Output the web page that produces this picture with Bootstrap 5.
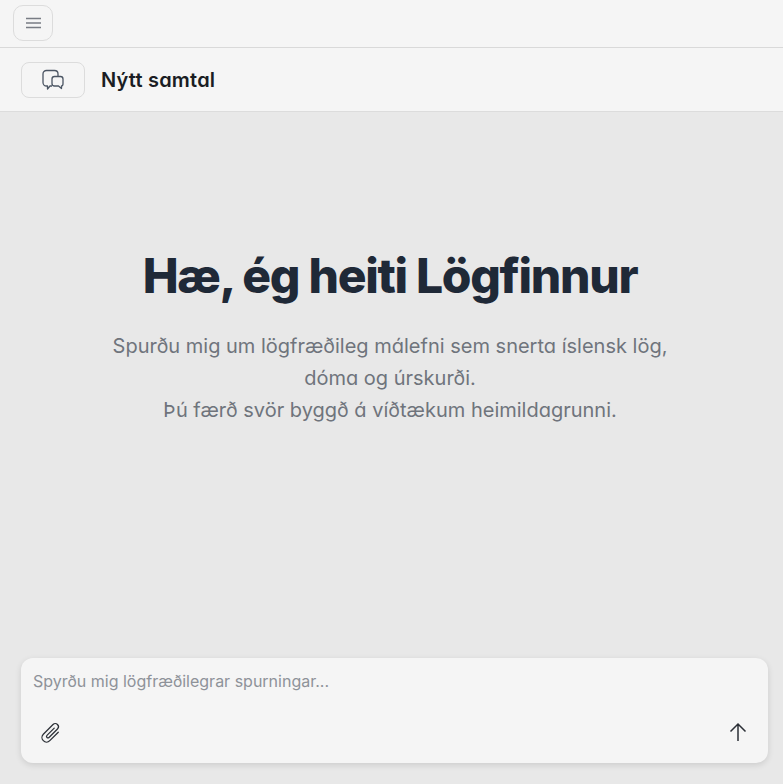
<!DOCTYPE html>
<html lang="is">
<head>
  <meta charset="UTF-8">
  <title>Lögfinnur</title>
  <link href="https://cdn.jsdelivr.net/npm/bootstrap@5.3.3/dist/css/bootstrap.min.css" rel="stylesheet">
  <style>
    html, body {
      height: 100%;
    }
    body {
      background-color: #e8e8e8;
      font-family: Inter, "Liberation Sans", sans-serif;
      font-feature-settings: "cv11";
      color: #1f2937;
    }
    .top-strip {
      height: 48px;
      background-color: #f5f5f5;
      border-bottom: 1px solid #d9d9d9;
      padding: 5px 13px;
    }
    .menu-btn {
      width: 40px;
      height: 36px;
      border: 1px solid #dcdcdc;
      border-radius: 10px;
      background-color: #f5f5f5;
      color: #787c84;
      padding: 0;
    }
    .chat-strip {
      height: 64px;
      background-color: #f5f5f5;
      border-bottom: 1px solid #dcdcdc;
      padding: 0 21px;
      gap: 16px;
    }
    .new-chat-btn {
      width: 64px;
      height: 36px;
      border: 1px solid #dcdcdc;
      border-radius: 8px;
      background-color: #f5f5f5;
      color: #4b5563;
      padding: 0;
    }
    .chat-title {
      font-size: 20px;
      font-weight: 600;
      letter-spacing: .2px;
      color: #1a1d23;
    }
    .hero {
      padding-top: 134px;
      padding-right: 3px;
    }
    .hero-title {
      font-size: 48px;
      line-height: 60px;
      font-weight: 800;
      letter-spacing: -1.3px;
      color: #1f2937;
      font-feature-settings: normal;
      margin-bottom: 24px;
    }
    .hero-text {
      font-size: 20px;
      line-height: 32px;
      color: #6f747c;
      width: 600px;
    }
    .ask-box {
      background-color: #f5f5f5;
      border-radius: 12px;
      box-shadow: 0 2px 6px rgba(0, 0, 0, .12);
      margin: 0 15px 21px 21px;
      height: 105px;
      padding: 11px 18px 18px;
    }
    .ask-input {
      border: 0;
      background: transparent;
      outline: 0;
      font-size: 16px;
      line-height: 24px;
      color: #1f2937;
      padding: 0 0 0 12px;
      margin-left: -18px;
      width: 100%;
    }
    .ask-input::placeholder {
      color: #8e9299;
    }
    .icon-btn {
      border: 0;
      background: transparent;
      padding: 0;
      width: 24px;
      height: 24px;
      color: #2b2f36;
    }
  </style>
</head>
<body class="d-flex flex-column">
  <div class="top-strip">
    <button type="button" class="menu-btn d-flex align-items-center justify-content-center" aria-label="Valmynd">
      <svg width="16" height="16" viewBox="0 0 16 16" fill="none" stroke="currentColor" stroke-width="1.5"><path d="M1 3.5h15M1 8h15M1 12.5h15"/></svg>
    </button>
  </div>
  <div class="chat-strip d-flex align-items-center">
    <button type="button" class="new-chat-btn d-flex align-items-center justify-content-center" aria-label="Nýtt samtal">
      <svg width="24" height="22" viewBox="0 0 24 22" fill="none" stroke="currentColor" stroke-width="1.3" stroke-linejoin="round"><path d="M11 17H9L6.5 20V17H5.5C3.5 17 2 15.5 2 13.5V5C2 3 3.5 1.5 5.5 1.5H13.5C15.5 1.5 17 3 17 5V7.5"/><path d="M13.5 7.5H19.5C21 7.5 22 8.5 22 10V14.5C22 16 21 17 20.5 17V19.5L17.5 17H13.5C12 17 11 16 11 14.5V10C11 8.5 12 7.5 13.5 7.5Z"/></svg>
    </button>
    <div class="chat-title">Nýtt samtal</div>
  </div>
  <main class="hero flex-grow-1 text-center d-flex flex-column align-items-center">
    <h1 class="hero-title">Hæ, ég heiti Lögfinnur</h1>
    <p class="hero-text mb-0">Spurðu mig um lögfræðileg málefni sem snerta íslensk lög, dóma og úrskurði.<br>Þú færð svör byggð á víðtækum heimildagrunni.</p>
  </main>
  <div class="ask-box d-flex flex-column justify-content-between">
    <input type="text" class="ask-input" placeholder="Spyrðu mig lögfræðilegrar spurningar...">
    <div class="d-flex justify-content-between align-items-center">
      <button type="button" class="icon-btn d-flex align-items-center justify-content-center" aria-label="Hengja við">
        <svg width="24" height="24" viewBox="1.5 1.5 21 21" fill="none" stroke="currentColor" stroke-width="1.1" stroke-linecap="round"><path d="M16 7V17.5a4 4 0 0 1-8 0V5.5a2.75 2.75 0 0 1 5.5 0V16a1.25 1.25 0 0 1-2.5 0V7" transform="rotate(45 12 12)"/></svg>
      </button>
      <button type="button" class="icon-btn d-flex align-items-center justify-content-center" aria-label="Senda">
        <svg width="24" height="24" viewBox="0 0 24 24" fill="none" stroke="currentColor" stroke-width="1.5"><path d="M12 20V3.5M4.5 10.5 12 3l7.5 7.5"/></svg>
      </button>
    </div>
  </div>
  <script src="https://cdn.jsdelivr.net/npm/bootstrap@5.3.3/dist/js/bootstrap.bundle.min.js"></script>
</body>
</html>
